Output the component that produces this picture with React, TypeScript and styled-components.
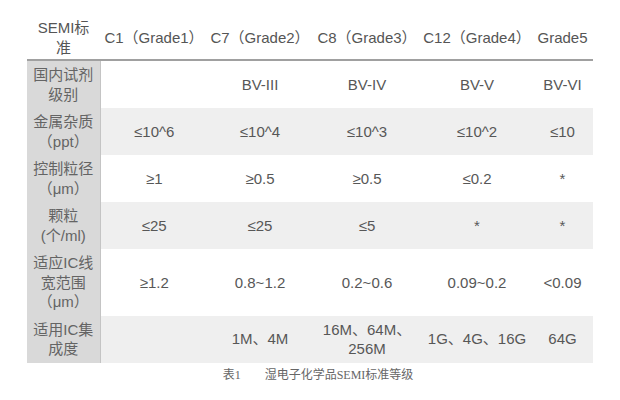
import React from "react";
import styled, { createGlobalStyle } from "styled-components";

const GlobalStyle = createGlobalStyle`
  html, body {
    margin: 0;
    padding: 0;
    background: #fff;
  }
`;

type Row = {
  label: React.ReactNode;
  cells: React.ReactNode[];
  shaded?: boolean;
};

const headers = [
  "C1（Grade1）",
  "C7（Grade2）",
  "C8（Grade3）",
  "C12（Grade4）",
  "Grade5",
];

const rows: Row[] = [
  {
    label: (
      <>
        国内试剂
        <br />
        级别
      </>
    ),
    cells: ["", "BV-III", "BV-IV", "BV-V", "BV-VI"],
  },
  {
    label: (
      <>
        金属杂质
        <br />
        （ppt）
      </>
    ),
    cells: ["≤10^6", "≤10^4", "≤10^3", "≤10^2", "≤10"],
    shaded: true,
  },
  {
    label: (
      <>
        控制粒径
        <br />
        （μm）
      </>
    ),
    cells: ["≥1", "≥0.5", "≥0.5", "≤0.2", "*"],
  },
  {
    label: (
      <>
        颗粒
        <br />
        (个/ml)
      </>
    ),
    cells: ["≤25", "≤25", "≤5", "*", "*"],
    shaded: true,
  },
  {
    label: (
      <>
        适应IC线
        <br />
        宽范围
        <br />
        （μm）
      </>
    ),
    cells: ["≥1.2", "0.8~1.2", "0.2~0.6", "0.09~0.2", "<0.09"],
  },
  {
    label: (
      <>
        适用IC集
        <br />
        成度
      </>
    ),
    cells: [
      "",
      "1M、4M",
      <>
        16M、64M、
        <br />
        256M
      </>,
      "1G、4G、16G",
      "64G",
    ],
    shaded: true,
  },
];

const colWidths = [73, 108, 104, 110, 110, 61];

function App() {
  return (
    <Page>
      <GlobalStyle />
      <Figure>
        <Table>
          <colgroup>
            {colWidths.map((w, i) => (
              <col key={i} style={{ width: w }} />
            ))}
          </colgroup>
          <thead>
            <tr>
              <HeadCell>
                SEMI标
                <br />准
              </HeadCell>
              {headers.map((h) => (
                <HeadCell key={h}>{h}</HeadCell>
              ))}
            </tr>
          </thead>
          <tbody>
            {rows.map((r, i) => (
              <BodyRow key={i} $shaded={r.shaded}>
                <LabelCell>{r.label}</LabelCell>
                {r.cells.map((c, j) => (
                  <ValueCell key={j}>{c}</ValueCell>
                ))}
              </BodyRow>
            ))}
          </tbody>
        </Table>
        <Caption>表1　　湿电子化学品SEMI标准等级</Caption>
      </Figure>
    </Page>
  );
}

const Page = styled.div`
  width: 620px;
  height: 400px;
  padding: 14px 27px 0;
  box-sizing: border-box;
  font-family: "Liberation Sans", "Noto Sans CJK SC", sans-serif;
  color: #575757;
`;

const Figure = styled.div`
  width: 566px;
  display: flex;
  flex-direction: column;
`;

const Table = styled.table`
  width: 566px;
  table-layout: fixed;
  border-collapse: collapse;
  font-size: 15px;
  line-height: 19.5px;
`;

const HeadCell = styled.th`
  font-weight: normal;
  text-align: center;
  white-space: nowrap;
  padding: 4px 0 2px;
  border-bottom: 2px solid #a0a0a0;
  color: #555;
`;

const BodyRow = styled.tr<{ $shaded?: boolean }>`
  background: ${(p) => (p.$shaded ? "#efefef" : "#fff")};

  & + & td {
    border-top: 1px dashed #b8b8b8;
  }
`;

const LabelCell = styled.td`
  background: #d9d9d9;
  border-right: 1px solid #c4c4c4;
  text-align: center;
  padding: 4px 2px;
  color: #646464;
`;

const ValueCell = styled.td`
  text-align: center;
  padding: 4px 2px;
  color: #575757;
`;

const Caption = styled.div`
  margin-top: 4px;
  padding-left: 16px;
  text-align: center;
  font-family: "Liberation Serif", "Noto Sans CJK SC", serif;
  font-size: 12px;
  line-height: 16px;
  color: #666;
`;

export default App;
